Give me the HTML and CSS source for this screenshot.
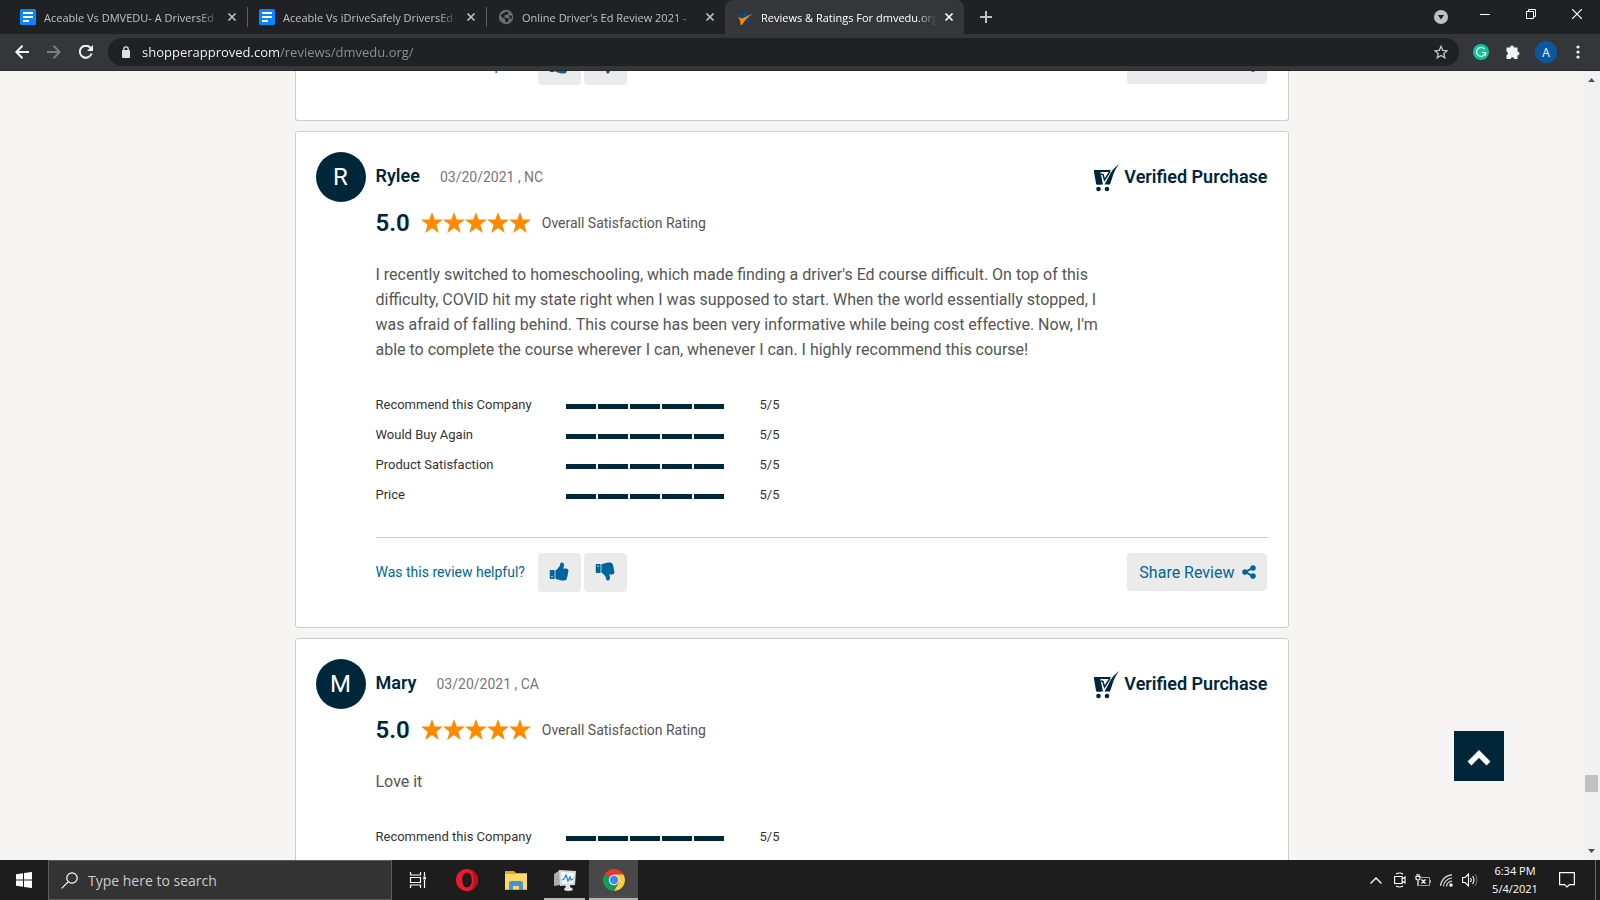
FILE: index.html
```
<!DOCTYPE html>
<html lang="en">
<head>
    <meta charset="UTF-8">
    <meta name="viewport" content="width=device-width, initial-scale=1.0">
    <title>Reviews &amp; Ratings For dmvedu.org</title>
    <link rel="stylesheet" href="styles.css">
</head>
<body>
    <!-- Shared icons -->
    <svg class="sprite" aria-hidden="true">
        <symbol id="close" viewBox="0 0 16 16"><path d="M4.500 4.500l7 7M11.500 4.500l-7 7" fill="none" stroke="currentColor" stroke-width="1.700"/></symbol>
        <symbol id="doc" viewBox="0 0 16 16"><rect width="16" height="16" rx="1.500" fill="#0a84ff"/><path d="M3 4h10M3 8h10M3 12h6" stroke="#fff" stroke-width="2"/></symbol>
        <symbol id="star" viewBox="0 0 22 22"><path d="M11 0l2.700 7.600H22l-6.600 5.100L17.800 21 11 16.100 4.200 21l2.400-8.300L0 7.600h8.300z" fill="#ff8a00"/></symbol>
        <symbol id="thumb" viewBox="0 0 1792 1792"><path fill="currentColor" d="M320 1344q0-26-19-45t-45-19q-27 0-45.500 19t-18.500 45q0 27 18.500 45.500t45.500 18.500q26 0 45-18.500t19-45.500zm160-512v640q0 26-19 45t-45 19h-288q-26 0-45-19t-19-45v-640q0-26 19-45t45-19h288q26 0 45 19t19 45zm1184 0q0 86-55 149 15 44 15 76 3 76-43 137 17 56 0 117-15 57-54 94 9 112-49 181-64 76-197 78h-129q-66 0-144-15.500t-121.500-29-120.500-39.500q-123-43-158-44-26-1-45-19.500t-19-44.500v-641q0-25 18-43.500t43-20.500q24-2 76-59t101-121q68-87 101-120 18-18 31-48t17.500-48.500 13.500-60.500q7-39 12.500-61t19.500-52 34-50q19-19 45-19 46 0 82.500 10.500t60 26 40 40.500 24 45 12 50 5 45 .5 39q0 38-9.500 76t-19 60-27.500 56q-3 6-10 18t-11 22-8 24h277q78 0 135 57t57 135z"/></symbol>
        <symbol id="share" viewBox="0 0 1792 1792"><path fill="currentColor" d="M1344 1024q133 0 226.500 93.500t93.500 226.500-93.500 226.500-226.500 93.500-226.500-93.500-93.500-226.500q0-12 2-34l-360-180q-92 86-218 86-133 0-226.500-93.500t-93.500-226.500 93.500-226.500 226.500-93.500q126 0 218 86l360-180q-2-22-2-34 0-133 93.500-226.500t226.500-93.500 226.500 93.500 93.500 226.500-93.500 226.500-226.500 93.500q-126 0-218-86l-360 180q2 22 2 34t-2 34l360 180q92-86 218-86z"/></symbol>
        <symbol id="cart" viewBox="0 0 26 28"><path d="M0 6h17l-1.500 2H4l3 12.500H2.200L0 8z" fill="#00263a"/><path d="M2.500 6.500h3.500L9 20.500H3z" fill="#00263a"/><path d="M7 10l2 .5 1.500 5.500L16 7.500" fill="none" stroke="#00263a" stroke-width="1.500"/><path d="M10.500 20.500L17 8.500C19 5 22 2.500 25 0c-3 4-5.500 9-6.500 13L16 20.500z" fill="#00263a"/><circle cx="4.500" cy="25" r="2.300" fill="#00263a"/><circle cx="13" cy="25" r="2.300" fill="#00263a"/></symbol>
    </svg>

    <header class="browser">
        <div class="tab-strip">
            <div class="tab">
                <svg class="icon"><use href="#doc"/></svg>
                <span class="tab-title">Aceable Vs DMVEDU- A DriversEd</span>
                <button class="tab-close" aria-label="Close tab"><svg class="icon"><use href="#close"/></svg></button>
            </div>
            <div class="tab">
                <svg class="icon"><use href="#doc"/></svg>
                <span class="tab-title">Aceable Vs iDriveSafely DriversEd</span>
                <button class="tab-close" aria-label="Close tab"><svg class="icon"><use href="#close"/></svg></button>
            </div>
            <div class="tab no-divider">
                <svg class="icon" viewBox="0 0 16 16"><circle cx="8" cy="8" r="7.200" fill="#6b7075"/><path d="M8 2.500l3 1-1 2-3 .5-1 2 2 1 2 0 1 2-2 2.500-1.500-.5-.5-3L3.500 8 2.500 6z" fill="#202124"/><path d="M11 6l3 1-.5 3-2-.5z" fill="#202124"/></svg>
                <span class="tab-title">Online Driver's Ed Review 2021 - </span>
                <button class="tab-close" aria-label="Close tab"><svg class="icon"><use href="#close"/></svg></button>
            </div>
            <div class="tab active">
                <svg class="icon" viewBox="0 0 16 16"><path d="M7.500 1l1.700 4.500L15 5l-3 4 1.500 6L8 11.500 6 12 4.500 9 0 5.500h5.500z" fill="#0a4a86"/><path d="M1 8l4 1.500L16 4.500Q9 9 5 16L3.500 15.500 3 11z" fill="#ff8a00"/></svg>
                <span class="tab-title">Reviews &amp; Ratings For dmvedu.org</span>
                <button class="tab-close" aria-label="Close tab"><svg class="icon"><use href="#close"/></svg></button>
            </div>
            <button class="new-tab" aria-label="New tab"><svg width="12" height="12" viewBox="0 0 12 12"><path d="M6 0v12M0 6h12" stroke="currentColor" stroke-width="2"/></svg></button>
            <div class="window-controls">
                <button class="tab-search" aria-label="Search tabs"><svg width="14" height="14" viewBox="0 0 14 14"><circle cx="7" cy="7" r="7" fill="#bdc1c6"/><path d="M3.800 5h6.400L7 9.500z" fill="#202124"/></svg></button>
                <button aria-label="Minimize"><svg width="10" height="10" viewBox="0 0 10 10"><path d="M0 5.500h10" stroke="#fff"/></svg></button>
                <button aria-label="Restore"><svg width="10" height="10" viewBox="0 0 10 10"><path d="M.5 2.500h7v7h-7zM2.500 2.500v-2h7v7h-2" fill="none" stroke="#fff"/></svg></button>
                <button aria-label="Close"><svg width="10" height="10" viewBox="0 0 10 10"><path d="M0 0l10 10M10 0L0 10" stroke="#fff" stroke-width="1.200"/></svg></button>
            </div>
        </div>
        <div class="toolbar">
            <button aria-label="Back"><svg width="14" height="14" viewBox="0 0 14 14"><path d="M14 7H1.500M7.500 .8L1.300 7l6.200 6.200" fill="none" stroke="#f1f3f4" stroke-width="2"/></svg></button>
            <button aria-label="Forward"><svg width="14" height="14" viewBox="0 0 14 14"><path d="M0 7h12.500M6.500 .8L12.700 7l-6.200 6.200" fill="none" stroke="#7c7e81" stroke-width="2"/></svg></button>
            <button aria-label="Reload"><svg width="14" height="14" viewBox="0 0 14 14"><path d="M12.600 8.500A6 6 0 1 1 11.500 2.900" fill="none" stroke="#f1f3f4" stroke-width="2"/><path d="M14 0v6H8z" fill="#f1f3f4"/></svg></button>
            <div class="omnibox">
                <svg width="10" height="12" viewBox="0 0 10 12"><rect x="1" y="4" width="8" height="8" rx="1" fill="#dfe1e5"/><path d="M2.800 4.500V3a2.200 2.200 0 0 1 4.400 0v1.500" fill="none" stroke="#dfe1e5" stroke-width="1.300"/></svg>
                <input class="url" type="text" aria-label="Address" value="shopperapproved.com/reviews/dmvedu.org/">
                <button aria-label="Bookmark"><svg width="14" height="14" viewBox="0 0 14 14"><path d="M7 1.300l1.700 4 4.400.4-3.300 2.900 1 4.200L7 10.500l-3.800 2.300 1-4.200L.9 5.700l4.400-.4z" fill="none" stroke="#c4c7ca" stroke-width="1.300"/></svg></button>
            </div>
            <div class="extensions">
                <button aria-label="Grammarly"><svg class="icon" viewBox="0 0 16 16"><circle cx="8" cy="8" r="8" fill="#10c39a"/><path d="M11.500 5A4.500 4.500 0 1 0 12.500 8.500H9M12.500 8.500v3" fill="none" stroke="#fff" stroke-width="1.200"/></svg></button>
                <button aria-label="Extensions"><svg class="icon" viewBox="0 0 16 16"><path d="M1.500 3.500H5a2 2 0 1 1 4 0h3.500v4a2 2 0 1 1 0 4V15H9.300a1.800 1.800 0 0 0-3.600 0H1.500v-3.800a1.900 1.900 0 0 0 0-3.700z" fill="#f1f3f4"/></svg></button>
                <button class="profile" aria-label="Profile">A</button>
                <button aria-label="Menu"><svg width="4" height="14" viewBox="0 0 4 14"><circle cx="2" cy="2" r="1.600" fill="#f1f3f4"/><circle cx="2" cy="7" r="1.600" fill="#f1f3f4"/><circle cx="2" cy="12" r="1.600" fill="#f1f3f4"/></svg></button>
            </div>
        </div>
    </header>

    <div class="viewport">
        <main class="reviews">
            <article class="review cut">
                <div class="review-main">
                    <footer class="review-footer">
                        <span class="helpful">Was this review helpful?</span>
                        <button class="vote" aria-label="Helpful"><svg class="vote-icon"><use href="#thumb"/></svg></button>
                        <button class="vote" aria-label="Not helpful"><svg class="vote-icon down"><use href="#thumb"/></svg></button>
                        <button class="share">Share Review <svg class="icon"><use href="#share"/></svg></button>
                    </footer>
                </div>
            </article>

            <article class="review">
                <div class="avatar">R</div>
                <div class="review-main">
                    <div class="review-head">
                        <h2 class="name">Rylee</h2>
                        <span class="date">03/20/2021 , NC</span>
                        <span class="verified"><svg class="cart"><use href="#cart"/></svg>Verified Purchase</span>
                    </div>
                    <div class="rating">
                        <strong class="score">5.0</strong>
                        <span class="stars" role="img" aria-label="5 stars"><svg><use href="#star"/></svg><svg><use href="#star"/></svg><svg><use href="#star"/></svg><svg><use href="#star"/></svg><svg><use href="#star"/></svg></span>
                        <span class="rating-label">Overall Satisfaction Rating</span>
                    </div>
                    <p class="comment">I recently switched to homeschooling, which made finding a driver's Ed course difficult. On top of this difficulty, COVID hit my state right when I was supposed to start. When the world essentially stopped, I was afraid of falling behind. This course has been very informative while being cost effective. Now, I'm able to complete the course wherever I can, whenever I can. I highly recommend this course!</p>
                    <ul class="metrics">
                        <li><span>Recommend this Company</span><span class="bar"><i></i><i></i><i></i><i></i><i></i></span><span>5/5</span></li>
                        <li><span>Would Buy Again</span><span class="bar"><i></i><i></i><i></i><i></i><i></i></span><span>5/5</span></li>
                        <li><span>Product Satisfaction</span><span class="bar"><i></i><i></i><i></i><i></i><i></i></span><span>5/5</span></li>
                        <li><span>Price</span><span class="bar"><i></i><i></i><i></i><i></i><i></i></span><span>5/5</span></li>
                    </ul>
                    <footer class="review-footer">
                        <span class="helpful">Was this review helpful?</span>
                        <button class="vote" aria-label="Helpful"><svg class="vote-icon"><use href="#thumb"/></svg></button>
                        <button class="vote" aria-label="Not helpful"><svg class="vote-icon down"><use href="#thumb"/></svg></button>
                        <button class="share">Share Review <svg class="icon"><use href="#share"/></svg></button>
                    </footer>
                </div>
            </article>

            <article class="review">
                <div class="avatar">M</div>
                <div class="review-main">
                    <div class="review-head">
                        <h2 class="name">Mary</h2>
                        <span class="date">03/20/2021 , CA</span>
                        <span class="verified"><svg class="cart"><use href="#cart"/></svg>Verified Purchase</span>
                    </div>
                    <div class="rating">
                        <strong class="score">5.0</strong>
                        <span class="stars" role="img" aria-label="5 stars"><svg><use href="#star"/></svg><svg><use href="#star"/></svg><svg><use href="#star"/></svg><svg><use href="#star"/></svg><svg><use href="#star"/></svg></span>
                        <span class="rating-label">Overall Satisfaction Rating</span>
                    </div>
                    <p class="comment">Love it</p>
                    <ul class="metrics">
                        <li><span>Recommend this Company</span><span class="bar"><i></i><i></i><i></i><i></i><i></i></span><span>5/5</span></li>
                    </ul>
                </div>
            </article>
        </main>

        <button class="to-top" aria-label="Back to top"><svg width="24" height="16" viewBox="0 0 24 16"><path d="M2.500 13.500L12 4l9.500 9.500" fill="none" stroke="#fff" stroke-width="5.500"/></svg></button>

        <div class="scrollbar">
            <svg width="7" height="4" viewBox="0 0 7 4"><path d="M0 4l3.500-4L7 4z" fill="#505050"/></svg>
            <div class="thumb"></div>
            <svg width="7" height="4" viewBox="0 0 7 4"><path d="M0 0l3.500 4L7 0z" fill="#505050"/></svg>
        </div>
    </div>

    <footer class="taskbar">
        <button class="start" aria-label="Start"><svg width="16" height="16" viewBox="0 0 16 16"><path d="M0 2.200L7 1.200v6.300H0zM8 1.100L16 0v7.500H8zM0 8.500h7v6.300l-7-1zM8 8.500h8V16l-8-1.100z" fill="#fff"/></svg></button>
        <label class="search">
            <svg width="17" height="17" viewBox="0 0 17 17"><circle cx="11" cy="6" r="5.200" fill="none" stroke="#fff" stroke-width="1.200"/><path d="M7.200 9.800L.6 16.400" stroke="#fff" stroke-width="1.200"/></svg>
            <input type="text" placeholder="Type here to search" aria-label="Search">
        </label>
        <div class="apps">
            <button aria-label="Task View"><svg width="18" height="16" viewBox="0 0 18 16"><path d="M1.500 0v3h10V0M1.500 16v-3h10v3M1.500 5.500h10v5h-10zM15.500 0v4M15.500 8v8" fill="none" stroke="#fff" stroke-width="1.200"/><rect x="14.300" y="4.500" width="2.500" height="3" fill="#fff"/></svg></button>
            <button aria-label="Opera"><svg width="24" height="24" viewBox="0 0 24 24"><path fill-rule="evenodd" d="M12 1a11 11 0 1 0 0 22 11 11 0 0 0 0-22zm0 3.500c3 0 4.800 3.300 4.800 7.500s-1.800 7.500-4.800 7.500S7.200 16.200 7.200 12 9 4.500 12 4.500z" fill="#f0192c"/><path d="M14 1.200c12 2.500 12 19 0 21.600 2-1 5-4 5-10.800s-3-9.800-5-10.800z" fill="#b90d1c"/></svg></button>
            <button aria-label="File Explorer"><svg width="24" height="24" viewBox="0 0 24 24"><path d="M1 3h9l2 2h11v17H1z" fill="#e8a815"/><path d="M1 6h22v15H1z" fill="#ffd868"/><path d="M5 22v-7q0-2 2-2h10q2 0 2 2v7h-4v-4H9v4z" fill="#3f94dc"/></svg></button>
            <button class="running" aria-label="Monitor"><svg width="24" height="24" viewBox="0 0 24 24"><path d="M1 6l6-4v15l-6 1z" fill="#a9adad"/><path d="M6 2l17 1-1 14-15 1z" fill="#d5d9da"/><path d="M8 4l13 1-1 10-11 1z" fill="#f5fbff"/><path d="M9 12l2-1 2-4 2 6 2-4 1 3 2-1" fill="none" stroke="#3385b8" stroke-width="1.300"/><path d="M12 17h5v2q3 1 3 3-5 2-9 0 0-2 2-3z" fill="#e2e4e4"/></svg></button>
            <button class="running current" aria-label="Chrome"><svg width="24" height="24" viewBox="0 0 24 24"><path d="M12 12L2.500 6.500A11 11 0 0 1 21.500 6.500z" fill="#e33b2e"/><path d="M12 12l4 3-4 8A11 11 0 0 1 2.500 6.500z" fill="#109d58"/><path d="M12 6.500h9.500A11 11 0 0 1 12 23l4.800-8.300z" fill="#ffcd40"/><circle cx="12" cy="12" r="5.200" fill="#f1f1f1"/><circle cx="12" cy="12" r="4.200" fill="#4285f4"/></svg></button>
        </div>
        <div class="tray">
            <svg width="12" height="7" viewBox="0 0 12 7"><path d="M.5 6.500L6 1l5.500 5.500" fill="none" stroke="#fff" stroke-width="1.300"/></svg>
            <svg width="12" height="16" viewBox="0 0 12 16"><path d="M.6 4.500h7.500v7H.6zM8 7l3-2v6l-3-2M2 2q3.500-2 7 0M2 14q3.500 2 7 0" fill="none" stroke="#fff" stroke-width="1.100"/></svg>
            <svg width="16" height="13" viewBox="0 0 16 13"><path d="M6 3.500h8.500v8H4.500M15.500 6v3" fill="none" stroke="#a0a0a0"/><path d="M1 2.500h4v2q0 1.500-2 1.500T1 4.500zM2 0v2.500M4 0v2.500M3 6v6M6.500 5.500l4 4M10.500 5.500l-4 4" fill="none" stroke="#fff" stroke-width="1.200"/></svg>
            <svg width="13" height="13" viewBox="0 0 13 13"><path d="M.6 12A12 12 0 0 1 12 .8M3.500 12.500A9 9 0 0 1 12 4M6.500 12.500A6 6 0 0 1 12 7.200" fill="none" stroke="#d6d6d6" stroke-width="1.200"/><circle cx="11" cy="11" r="1.800" fill="#fff"/></svg>
            <svg width="17" height="14" viewBox="0 0 17 14"><path d="M.6 4.500h2.500L6.500 1v12L3.100 9.500H.6zM8.500 5q1.500 2 0 4M10.500 3q3 4 0 8" fill="none" stroke="#fff" stroke-width="1.100"/><path d="M13 1q4 6 0 12" fill="none" stroke="#777"/></svg>
            <div class="clock"><span>6:34 PM</span><span>5/4/2021</span></div>
            <svg class="notice" width="16" height="16" viewBox="0 0 16 16"><path d="M.6 .6h14.800v12H10.500L8 15l-2.500-2.400H.6z" fill="none" stroke="#fff" stroke-width="1.200"/></svg>
        </div>
    </footer>
</body>
</html>
```
FILE: styles.css
```
* {
    box-sizing: border-box;
}
body {
    margin: 0;
    height: 100vh;
    display: flex;
    flex-direction: column;
    overflow: hidden;
    font-family: Roboto, Arial, sans-serif;
    background-color: #f6f5f3;
}
button {
    display: flex;
    align-items: center;
    justify-content: center;
    flex: none;
    padding: 0;
    border: none;
    background: none;
    color: inherit;
    font-family: inherit;
    cursor: pointer;
}
svg {
    display: block;
    flex: none;
}
.sprite {
    position: absolute;
    width: 0;
    height: 0;
}
.icon {
    width: 16px;
    height: 16px;
}

/* Browser */
.browser {
    flex: none;
    font-family: "Open Sans", "Segoe UI", sans-serif;
    background-color: #202124;
    color: #bdc1c6;
}
.tab-strip {
    display: flex;
    height: 34px;
    padding-left: 8px;
}
.tab {
    display: flex;
    align-items: center;
    position: relative;
    width: 239px;
    padding: 0 7px 0 12px;
    font-size: 11px;
}
.tab::after {
    content: "";
    position: absolute;
    right: -1px;
    top: 7px;
    width: 1px;
    height: 20px;
    background-color: #5b5d60;
}
.tab.no-divider::after, .tab.active::after {
    display: none;
}
.tab.active {
    background-color: #35363a;
    color: #fff;
    border-radius: 8px 8px 0 0;
}
.tab-title {
    flex: 1;
    margin: 0 4px 0 8px;
    overflow: hidden;
    white-space: nowrap;
    -webkit-mask-image: linear-gradient(to right, #000 88%, transparent);
    mask-image: linear-gradient(to right, #000 88%, transparent);
}
.new-tab {
    width: 44px;
}
.window-controls {
    display: flex;
    margin-left: auto;
}
.window-controls button {
    width: 46px;
    height: 28px;
}
.window-controls .tab-search {
    width: 42px;
    height: 34px;
}
.toolbar {
    display: flex;
    align-items: center;
    height: 37px;
    padding: 0 15px 0 8px;
    background-color: #35363a;
    border-bottom: 1px solid #28292b;
}
.toolbar > button {
    width: 28px;
    height: 28px;
    margin-right: 4px;
}
.omnibox {
    display: flex;
    align-items: center;
    flex: 1;
    height: 28px;
    margin-left: 4px;
    padding: 0 11px 0 13px;
    border-radius: 14px;
    background-color: #202124;
}
/* host part is brighter than the path */
.url {
    flex: 1;
    margin-left: 11px;
    padding: 0;
    border: none;
    outline: none;
    font-family: inherit;
    font-size: 13px;
    color: transparent;
    background: linear-gradient(to right, #fff 137px, #8f9296 137px);
    -webkit-background-clip: text;
    background-clip: text;
}
.extensions {
    display: flex;
    align-items: center;
    gap: 14px;
    margin-left: 14px;
}
.extensions button:first-child {
    margin-right: 2px;
}
.profile {
    width: 22px;
    height: 22px;
    border-radius: 50%;
    background-color: #0a599f;
    color: #fff;
    font-size: 12px;
}
.extensions button:last-child {
    width: 14px;
}

/* Page */
.viewport {
    display: flex;
    flex: 1;
    min-height: 0;
    position: relative;
    overflow: hidden;
}
.reviews {
    flex: 1;
    margin-top: -42px;
}
.review {
    display: flex;
    gap: 10px;
    max-width: 994px;
    margin: 0 auto 10px;
    padding: 20px 20px 35px;
    border: 1px solid #ccc;
    border-radius: 3px;
    background-color: #fff;
}
.review.cut {
    padding: 0 20px 35px 80px;
}
.review.cut .review-footer {
    margin-top: 0;
}
.avatar {
    display: flex;
    align-items: center;
    justify-content: center;
    flex: none;
    width: 50px;
    height: 50px;
    border-radius: 50%;
    background-color: #00263a;
    color: #fff;
    font-size: 24px;
}
.review-main {
    flex: 1;
    min-width: 0;
}
.review-head {
    display: flex;
    align-items: center;
    height: 48px;
    color: #00263a;
}
.name {
    margin: 0 20px 0 0;
    padding-bottom: 2px;
    font-size: 18px;
    font-weight: 600;
}
.date {
    padding-top: 2px;
    font-size: 14px;
    color: #777;
}
.verified {
    display: flex;
    align-items: center;
    gap: 4px;
    margin-left: auto;
    font-size: 18px;
    font-weight: 600;
}
.cart {
    width: 26px;
    height: 28px;
    margin-top: 4px;
}
.rating {
    display: flex;
    align-items: center;
    height: 30px;
    margin-top: 8px;
    color: #00263a;
}
.score {
    font-size: 24px;
    font-weight: 600;
}
.stars {
    display: flex;
    margin: 0 11px;
}
.stars svg {
    width: 22px;
    height: 22px;
}
.rating-label {
    font-size: 14px;
    color: #555;
}
.comment {
    max-width: 730px;
    margin: 24px 0 27px;
    font-size: 16px;
    line-height: 25px;
    color: #555;
}
.metrics {
    margin: 0;
    padding: 0;
    list-style: none;
    font-size: 13px;
    color: #333;
}
.metrics li {
    display: grid;
    grid-template-columns: 190px 158px auto;
    align-items: center;
    height: 30px;
}
.metrics li span:last-child {
    padding-left: 36px;
}
.bar {
    display: flex;
    gap: 2px;
    padding-top: 5px;
}
.bar i {
    flex: 1;
    height: 5px;
    background-color: #00263a;
}
.review-footer {
    display: flex;
    align-items: flex-start;
    margin-top: 28px;
    padding-top: 15px;
    border-top: 1px solid #ccc;
    color: #069;
}
.helpful {
    margin-right: 13px;
    font-size: 14px;
    line-height: 38px;
}
.vote {
    width: 43px;
    height: 39px;
    margin-right: 3px;
    padding-bottom: 3px;
    border-radius: 4px;
    background-color: #ebebeb;
}
.vote-icon {
    width: 21px;
    height: 21px;
}
.vote-icon.down {
    transform: scaleY(-1);
}
.share {
    gap: 6px;
    height: 38px;
    margin: 0 1px 0 auto;
    padding: 0 10px 0 12px;
    border-radius: 4px;
    background-color: #ebebeb;
    font-size: 16px;
}
.to-top {
    position: absolute;
    right: 96px;
    bottom: 79px;
    width: 50px;
    height: 50px;
    padding-top: 3px;
    background-color: #00263a;
}
.scrollbar {
    display: flex;
    flex-direction: column;
    align-items: center;
    justify-content: space-between;
    width: 17px;
    padding: 7px 0;
    background-color: #f1f1f1;
}
.scrollbar .thumb {
    width: 13px;
    height: 17px;
    margin: auto 0 57px;
    background-color: #c1c1c1;
}

/* Taskbar */
.taskbar {
    display: flex;
    flex: none;
    height: 40px;
    font-family: "Open Sans", "Segoe UI", sans-serif;
    background-color: #1d1d1d;
    color: #fff;
}
.start {
    width: 48px;
}
.search {
    display: flex;
    align-items: center;
    gap: 10px;
    width: 344px;
    padding: 0 12px;
    border: 1px solid #5c5c5c;
    background-color: #333;
}
.search input {
    flex: 1;
    min-width: 0;
    padding: 0;
    border: none;
    outline: none;
    background: none;
    font-family: inherit;
    font-size: 14px;
}
.search input::placeholder {
    color: #ccc;
}
.apps {
    display: flex;
    margin-left: 1px;
}
.apps button {
    width: 49px;
    position: relative;
}
.running::after {
    content: "";
    position: absolute;
    left: 4px;
    right: 4px;
    bottom: 0;
    height: 2px;
    background-color: #b5b5b5;
}
.apps .current {
    background-color: #484848;
}
.running.current::after {
    left: 0;
    right: 0;
}
.tray {
    display: flex;
    align-items: center;
    gap: 9px;
    margin-left: auto;
    margin-right: 4px;
    padding-right: 20px;
    border-right: 1px solid #666;
}
.tray svg:first-child {
    margin-right: 3px;
}
.clock {
    display: flex;
    flex-direction: column;
    align-items: center;
    width: 54px;
    font-size: 11px;
    line-height: 18px;
}
.notice {
    margin-left: 8px;
}
```
